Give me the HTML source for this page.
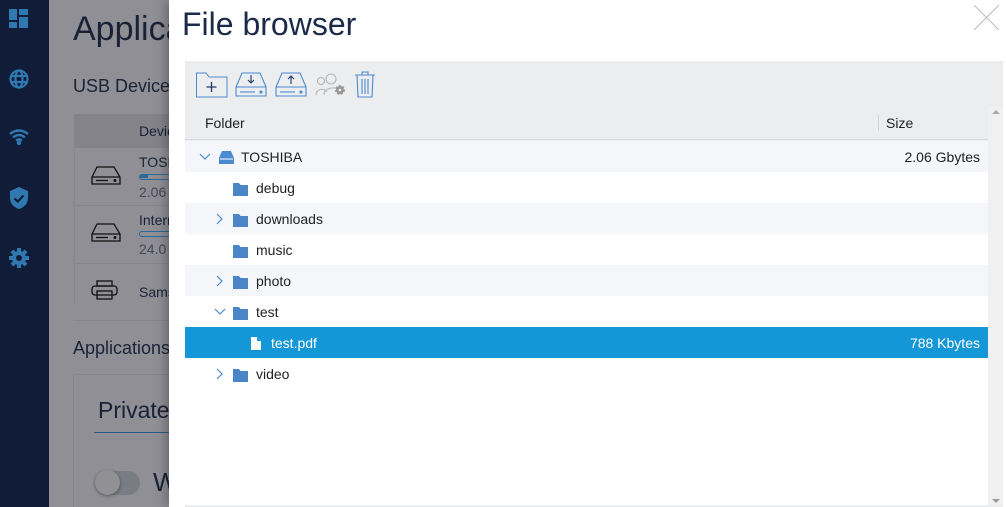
<!DOCTYPE html>
<html style="overflow:hidden;width:1006px;height:507px"><head><meta charset="utf-8"><style>
*{margin:0;padding:0;box-sizing:border-box}
body{width:1006px;height:507px;overflow:hidden;position:relative;font-family:"Liberation Sans",sans-serif;background:#8f8f95}
.abs{position:absolute}
.side{left:0;top:0;width:49px;height:507px;background:#111d38}
.bg{color:#1b2236}
.modal{left:169px;top:0;width:837px;height:507px;background:#fff;box-shadow:-4px 0 10px rgba(0,0,0,.25)}
.tb{left:16px;top:61px;width:818px;height:446px;background:#ecedef}
.row{position:absolute;left:0;width:803px;height:31px;font-size:14px;color:#222;line-height:33px}
.alt{background:#f4f6f9}
.sel{background:#1497d6;color:#fff}
.r{position:absolute;right:8px}
svg{position:absolute}
</style></head><body>
<div class="abs side">
<svg style="left:9px;top:9px" width="20" height="20" viewBox="0 0 20 20" fill="#2f78b0"><rect x="0" y="0" width="8" height="11"/><rect x="0" y="13" width="8" height="6"/><rect x="10" y="0" width="9" height="6"/><rect x="10" y="8" width="9" height="11"/></svg>
<svg style="left:9px;top:69px" width="20" height="20" viewBox="0 0 20 20" fill="none" stroke="#2f78b0" stroke-width="2.2"><circle cx="10" cy="10" r="8.5"/><ellipse cx="10" cy="10" rx="3.5" ry="8.5"/><line x1="1.5" y1="7" x2="18.5" y2="7"/><line x1="1.5" y1="13" x2="18.5" y2="13"/></svg>
<svg style="left:9px;top:128px" width="20" height="18" viewBox="0 0 20 18" fill="none" stroke="#2f78b0" stroke-width="2.4"><path d="M1 6Q10 -1 19 6"/><path d="M4 9.5Q10 4.5 16 9.5"/><path d="M7 12.5Q10 10.5 13 12.5"/><circle cx="10" cy="15" r="1" fill="#2f78b0"/></svg>
<svg style="left:9px;top:187px" width="20" height="23" viewBox="0 0 20 23"><path d="M10 0L19 4V11C19 17 14 21 10 22C6 21 1 17 1 11V4Z" fill="#2f78b0"/><path d="M5.5 11.5L8.8 14.5L14.5 8.5" stroke="#111d38" stroke-width="2.2" fill="none"/></svg>
<svg style="left:9px;top:248px" width="20" height="20" viewBox="0 0 20 20"><g fill="#2f78b0"><circle cx="10" cy="10" r="7"/><rect x="8" y="0" width="4" height="20"/><rect x="0" y="8" width="20" height="4"/><rect x="8" y="0" width="4" height="20" transform="rotate(45 10 10)"/><rect x="8" y="0" width="4" height="20" transform="rotate(-45 10 10)"/></g><circle cx="10" cy="10" r="3" fill="#111d38"/></svg>
</div>
<div class="abs bg" style="left:73px;top:10px;font-size:34px">Applica</div>
<div class="abs bg" style="left:73px;top:76px;font-size:18px">USB Devices</div>
<div class="abs" style="left:74px;top:114px;width:100px;height:34px;background:#838389"></div>
<div class="abs bg" style="left:139px;top:123px;font-size:14px">Devic</div>
<div class="abs" style="left:74px;top:148px;width:100px;height:156px;border-left:1px solid #878790"></div>
<div class="abs" style="left:74px;top:205px;width:100px;border-top:1px solid #86868d"></div>
<div class="abs" style="left:74px;top:263px;width:100px;border-top:1px solid #86868d"></div>
<div class="abs" style="left:74px;top:320px;width:100px;border-top:1px solid #86868d"></div>
<svg style="left:91px;top:166px" width="30" height="20" viewBox="0 0 30 20" fill="none" stroke="#111" stroke-width="1.3"><path d="M6 1H23L29 11V18H1V11Z"/><line x1="1" y1="11" x2="29" y2="11"/><line x1="5" y1="14.5" x2="17" y2="14.5"/><circle cx="24" cy="14.5" r=".8" fill="#111"/></svg>
<svg style="left:91px;top:223px" width="30" height="20" viewBox="0 0 30 20" fill="none" stroke="#111" stroke-width="1.3"><path d="M6 1H23L29 11V18H1V11Z"/><line x1="1" y1="11" x2="29" y2="11"/><line x1="5" y1="14.5" x2="17" y2="14.5"/><circle cx="24" cy="14.5" r=".8" fill="#111"/></svg>
<svg style="left:91px;top:280px" width="27" height="20" viewBox="0 0 27 20" fill="none" stroke="#111" stroke-width="1.3"><rect x="6" y="1" width="15" height="5"/><rect x="1" y="6" width="25" height="9" rx="3"/><rect x="6" y="11" width="15" height="8"/></svg>
<div class="abs bg" style="left:139px;top:154px;font-size:14px">TOSH</div>
<div class="abs" style="left:139px;top:174px;width:40px;height:6px;border:1.5px solid #2b6a96;border-radius:3px"><div style="width:8px;height:3px;background:#2b6a96"></div></div>
<div class="abs" style="left:139px;top:184px;font-size:14px;color:#44475a">2.06</div>
<div class="abs bg" style="left:139px;top:212px;font-size:14px">Intern</div>
<div class="abs" style="left:139px;top:231px;width:40px;height:6px;border:1.5px solid #2b6a96;border-radius:3px"></div>
<div class="abs" style="left:139px;top:241px;font-size:14px;color:#44475a">24.0</div>
<div class="abs bg" style="left:139px;top:284px;font-size:14px">Sams</div>
<div class="abs bg" style="left:73px;top:338px;font-size:18px">Applications</div>
<div class="abs" style="left:73px;top:374px;width:110px;height:133px;border:1px solid #85858c;border-bottom:none;border-radius:3px 3px 0 0"></div>
<div class="abs bg" style="left:98px;top:397px;font-size:23px">Private</div>
<div class="abs" style="left:94px;top:432px;width:90px;border-top:1.5px solid #2a5d85"></div>
<div class="abs" style="left:95px;top:471px;width:45px;height:24px;border-radius:12px;background:#7a7c84"></div>
<div class="abs" style="left:95px;top:470px;width:25px;height:25px;border-radius:50%;background:#909095;box-shadow:0 1px 3px rgba(0,0,0,.4)"></div>
<div class="abs bg" style="left:153px;top:467px;font-size:26px">W</div>

<div class="abs modal">
<div class="abs" style="left:13px;top:6px;font-size:32px;color:#1b2a48">File browser</div>
<svg style="left:805px;top:5px" width="25" height="25" viewBox="0 0 25 25" stroke="#bbb" stroke-width="1"><line x1="0" y1="0" x2="25" y2="25"/><line x1="25" y1="0" x2="0" y2="25"/></svg>
<div class="abs tb">
<svg style="left:11px;top:11px" width="32" height="26" viewBox="0 0 32 26" fill="none" stroke="#4a8ad0" stroke-width="1"><path d="M.5 1H10L13 5H31V25H.5Z"/><path d="M15.5 10V20M10.5 15H20.5" stroke="#1b3a6a" stroke-width="1.3"/></svg>
<svg style="left:50px;top:11px" width="32" height="26" viewBox="0 0 32 26" fill="none" stroke="#4a8ad0" stroke-width="1.1"><path d="M7 1H25L31 15V24H1V15Z"/><line x1="1" y1="15" x2="31" y2="15"/><line x1="5" y1="20" x2="20" y2="20"/><circle cx="26" cy="20" r="1" fill="#4a8ad0"/><path d="M16 3V11M13 8L16 11L19 8" stroke="#1b3a6a"/></svg>
<svg style="left:90px;top:11px" width="32" height="26" viewBox="0 0 32 26" fill="none" stroke="#4a8ad0" stroke-width="1.1"><path d="M7 1H25L31 15V24H1V15Z"/><line x1="1" y1="15" x2="31" y2="15"/><line x1="5" y1="20" x2="20" y2="20"/><circle cx="26" cy="20" r="1" fill="#4a8ad0"/><path d="M16 12V4M13 7L16 4L19 7" stroke="#1b3a6a"/></svg>
<svg style="left:130px;top:12px" width="32" height="24" viewBox="0 0 32 24" fill="none" stroke="#b5b5b5" stroke-width="1.1"><circle cx="6" cy="8" r="3.5"/><path d="M1 22C1 15 11 15 11 19"/><circle cx="16" cy="6" r="5"/><path d="M9 22C9 14 21 14 22 16"/><circle cx="25" cy="17" r="4" fill="#999" stroke="#999" stroke-width="2" stroke-dasharray="2 1.5"/><circle cx="25" cy="17" r="1.3" fill="#ecedef" stroke="none"/></svg>
<svg style="left:169px;top:10px" width="22" height="27" viewBox="0 0 22 27" fill="none" stroke="#4a8ad0" stroke-width="1.1"><path d="M1 4H21M8 4V1H14V4"/><path d="M3 4L4 26H18L19 4"/><path d="M8 8V23M11 8V23M14 8V23"/></svg>
</div>
<div class="abs" style="left:16px;top:106px;width:803px;height:34px;background:#ecedef;border-bottom:1px solid #d8dde5;font-size:14px;color:#222">
<span class="abs" style="left:20px;top:9px">Folder</span>
<span class="abs" style="left:693px;top:9px;height:16px;border-left:1px solid #d4d4d4"></span>
<span class="abs" style="left:701px;top:9px">Size</span>
</div>
<div class="abs" style="left:819px;top:106px;width:15px;height:399px;background:#f0f0f0"></div>
<div class="abs" style="left:823px;top:110px;width:0;height:0;border-left:4px solid transparent;border-right:4px solid transparent;border-bottom:4px solid #aaa"></div>
<div class="abs" style="left:823px;top:499px;width:0;height:0;border-left:4px solid transparent;border-right:4px solid transparent;border-top:4px solid #999"></div>
<div class="abs" style="left:16px;top:141px;width:803px;height:364px;background:#fff">
<div class="row alt" style="top:0"><svg style="left:14px;top:12px" width="12" height="8" viewBox="0 0 12 8" fill="none" stroke="#4a8ad0" stroke-width="1.2"><path d="M1 1L6 6L11 1"/></svg><svg style="left:34px;top:10px" width="15" height="13" viewBox="0 0 15 13" fill="#4a8ad0"><path d="M3 0H12L15 7V13H0V7Z"/><line x1="1" y1="8" x2="14" y2="8" stroke="#fff" stroke-width="1"/></svg><span class="abs" style="left:56px">TOSHIBA</span><span class="r">2.06 Gbytes</span></div>
<div class="row" style="top:31px"><svg style="left:48px;top:11px" width="15" height="13" viewBox="0 0 15 13" fill="#4a86c5"><path d="M0 0H6L7.5 2H15V13H0Z"/></svg><span class="abs" style="left:71px">debug</span></div>
<div class="row alt" style="top:62px"><svg style="left:31px;top:10px" width="8" height="12" viewBox="0 0 8 12" fill="none" stroke="#4a8ad0" stroke-width="1.2"><path d="M1 1L6 6L1 11"/></svg><svg style="left:48px;top:11px" width="15" height="13" viewBox="0 0 15 13" fill="#4a86c5"><path d="M0 0H6L7.5 2H15V13H0Z"/></svg><span class="abs" style="left:71px">downloads</span></div>
<div class="row" style="top:93px"><svg style="left:48px;top:11px" width="15" height="13" viewBox="0 0 15 13" fill="#4a86c5"><path d="M0 0H6L7.5 2H15V13H0Z"/></svg><span class="abs" style="left:71px">music</span></div>
<div class="row alt" style="top:124px"><svg style="left:31px;top:10px" width="8" height="12" viewBox="0 0 8 12" fill="none" stroke="#4a8ad0" stroke-width="1.2"><path d="M1 1L6 6L1 11"/></svg><svg style="left:48px;top:11px" width="15" height="13" viewBox="0 0 15 13" fill="#4a86c5"><path d="M0 0H6L7.5 2H15V13H0Z"/></svg><span class="abs" style="left:71px">photo</span></div>
<div class="row" style="top:155px"><svg style="left:29px;top:12px" width="12" height="8" viewBox="0 0 12 8" fill="none" stroke="#4a8ad0" stroke-width="1.2"><path d="M1 1L6 6L11 1"/></svg><svg style="left:48px;top:11px" width="15" height="13" viewBox="0 0 15 13" fill="#4a86c5"><path d="M0 0H6L7.5 2H15V13H0Z"/></svg><span class="abs" style="left:71px">test</span></div>
<div class="row sel" style="top:186px"><svg style="left:66px;top:10px" width="10" height="13" viewBox="0 0 10 13" fill="#fff"><path d="M0 0H6L10 4V13H0Z"/><path d="M6 0V4H10" fill="#1497d6"/></svg><span class="abs" style="left:86px">test.pdf</span><span class="r">788 Kbytes</span></div>
<div class="row" style="top:217px"><svg style="left:31px;top:10px" width="8" height="12" viewBox="0 0 8 12" fill="none" stroke="#4a8ad0" stroke-width="1.2"><path d="M1 1L6 6L1 11"/></svg><svg style="left:48px;top:11px" width="15" height="13" viewBox="0 0 15 13" fill="#4a86c5"><path d="M0 0H6L7.5 2H15V13H0Z"/></svg><span class="abs" style="left:71px">video</span></div>
</div>
</div>
</body></html>
